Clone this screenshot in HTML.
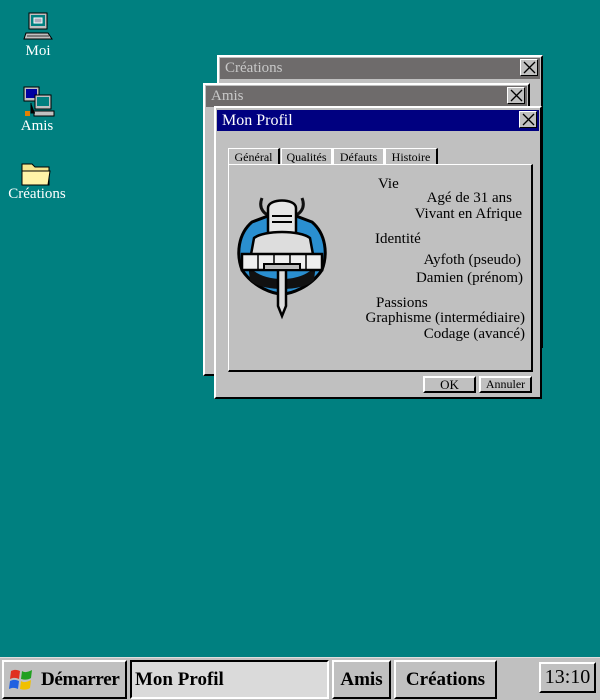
<!DOCTYPE html>
<html><head><style>
*{box-sizing:border-box;margin:0;padding:0}
body{width:600px;height:700px;background:#008080;position:relative;overflow:hidden;font-family:"Liberation Serif",serif;}
.abs{position:absolute}
.win{position:absolute;background:#c0c0c0;border:2px solid;border-color:#fff #000 #000 #fff;}
.tb{position:absolute;left:1px;right:1px;top:1px;height:21px;color:#c8c8c8;font-size:15px;padding-left:5px;line-height:21px;background:#6e6b6b}
.x{position:absolute;right:3px;top:2px;width:18px;height:17px;background:#c0c0c0;border:1px solid;border-color:#fff #000 #000 #fff;}
.x svg{position:absolute;left:2px;top:1px}
.btn{position:absolute;background:#c0c0c0;border:2px solid;border-color:#fff #000 #000 #fff;text-align:center}
.ic{position:absolute;color:#fff;font-size:15px;text-align:center;width:80px}
.t{position:absolute;font-size:15px;color:#000;white-space:nowrap}
.tab{position:absolute;top:148px;height:17px;font-size:12px;border-top:1px solid #fff;border-left:1px solid #fff;border-right:2px solid #000;text-align:center;line-height:16px}
</style></head><body>
<div class="ic" style="left:-2px;top:43px">Moi</div>
<svg class="abs" style="left:22px;top:11px" width="32" height="32"><rect x="7" y="2" width="18" height="16" fill="#c0c0c0" stroke="#000"/><rect x="9" y="4" width="14" height="11" fill="#008080"/><rect x="12" y="7" width="8" height="5" fill="#aab" stroke="#fff"/><path d="M4 22 L26 22 L30 28 L2 28Z" fill="#c0c0c0" stroke="#000"/><path d="M5 25h22" stroke="#333"/></svg>
<div class="ic" style="left:-3px;top:118px">Amis</div>
<svg class="abs" style="left:22px;top:85px" width="34" height="34"><rect x="2" y="2" width="15" height="14" fill="#c0c0c0" stroke="#000"/><rect x="4" y="4" width="11" height="9" fill="#0000a0"/><rect x="13" y="10" width="16" height="14" fill="#c0c0c0" stroke="#000"/><rect x="15" y="12" width="12" height="9" fill="#008080"/><rect x="12" y="26" width="20" height="5" fill="#c0c0c0" stroke="#000"/><path d="M9 18v10h4" stroke="#000"/><rect x="3" y="26" width="5" height="5" fill="#e08000"/></svg>
<div class="ic" style="left:-3px;top:186px">Créations</div>
<svg class="abs" style="left:19px;top:160px" width="34" height="28"><path d="M3 4h10l3 3h14v18H3z" fill="#f4e690" stroke="#000"/><path d="M3 11h28l-2 14H3z" fill="#fff3a8" stroke="#000"/></svg>

<div class="win" style="left:217px;top:55px;width:326px;height:293px"><div class="tb">Créations</div><div class="x"><svg width="13" height="13"><path d="M1 1L12 12M12 1L1 12" stroke="#000" stroke-width="1.3"/></svg></div></div>
<div class="win" style="left:203px;top:83px;width:327px;height:293px"><div class="tb">Amis</div><div class="x"><svg width="13" height="13"><path d="M1 1L12 12M12 1L1 12" stroke="#000" stroke-width="1.3"/></svg></div></div>
<div class="win" style="left:214px;top:106px;width:328px;height:293px">
<div class="tb" style="background:#000080;color:#fff;font-size:16px;top:2px">Mon Profil</div><div class="x" style="top:3px"><svg width="13" height="13"><path d="M1 1L12 12M12 1L1 12" stroke="#000" stroke-width="1.3"/></svg></div>
</div>
<div class="tab" style="left:228px;width:52px">Général</div>
<div class="tab" style="left:281px;width:52px;border-right-color:#fff">Qualités</div>
<div class="tab" style="left:333px;width:52px;border-right-color:#fff">Défauts</div>
<div class="tab" style="left:385px;width:53px">Histoire</div>
<div class="abs" style="left:228px;top:164px;width:305px;height:208px;border:2px solid;border-color:#fff #000 #000 #fff;border-left-width:1px;border-top-width:1px"></div>
<svg class="abs" style="left:234px;top:194px" width="96" height="126" viewBox="0 0 96 126">
<path d="M28 4 C24 14 30 22 40 22 M68 4 C72 14 66 22 56 22" stroke="#111" stroke-width="3" fill="none"/>
<path d="M18 28 C4 40 2 60 8 76 C20 94 40 100 48 100 C56 100 76 94 88 76 C94 60 92 40 78 28 L62 22 L34 22Z" fill="#2a8fd0" stroke="#000" stroke-width="3"/>
<path d="M14 70 C24 90 72 90 82 70 L80 86 C70 98 26 98 16 86Z" fill="#111"/>
<path d="M34 14 C34 4 62 4 62 14 L62 40 L34 40Z" fill="#e6e6e6" stroke="#000" stroke-width="2.5"/>
<path d="M38 22h20M38 28h20" stroke="#000" stroke-width="2"/>
<path d="M20 44 C30 36 66 36 76 44 L80 66 L16 66Z" fill="#ddd" stroke="#000" stroke-width="2.5"/>
<path d="M8 60 L88 60 L88 76 L8 76Z" fill="#eee" stroke="#000" stroke-width="2.5"/>
<path d="M24 60v16M40 60v16M56 60v16M72 60v16" stroke="#000" stroke-width="1.5"/>
<path d="M44 76 L52 76 L52 112 L48 122 L44 112Z" fill="#ddd" stroke="#000" stroke-width="2.5"/>
<path d="M30 70h36v6H30z" fill="#bbb" stroke="#000" stroke-width="2"/>
</svg>
<div class="t" style="left:378px;top:176px">Vie</div>
<div class="t" style="right:88px;top:190px">Agé de 31 ans</div>
<div class="t" style="right:78px;top:206px">Vivant en Afrique</div>
<div class="t" style="left:375px;top:231px">Identité</div>
<div class="t" style="right:79px;top:252px">Ayfoth (pseudo)</div>
<div class="t" style="right:77px;top:270px">Damien (prénom)</div>
<div class="t" style="left:376px;top:295px">Passions</div>
<div class="t" style="right:75px;top:310px">Graphisme (intermédiaire)</div>
<div class="t" style="right:75px;top:326px">Codage (avancé)</div>
<div class="btn" style="left:423px;top:376px;width:53px;height:17px;font-size:13px;line-height:13px">OK</div>
<div class="btn" style="left:479px;top:376px;width:53px;height:17px;font-size:12px;line-height:13px">Annuler</div>

<div class="abs" style="left:0;top:657px;width:600px;height:43px;background:#c0c0c0;border-top:1px solid #dfdfdf"></div>
<div class="btn" style="left:2px;top:660px;width:125px;height:39px;font-weight:bold;font-size:19px;line-height:35px;text-align:left;padding-left:37px;letter-spacing:-0.3px">Démarrer</div>
<svg class="abs" style="left:6px;top:667px" width="30" height="26"><path d="M5 4 C9 2 12 3 14 4 L13 12 C11 11 8 10 4 12Z" fill="#e03020"/><path d="M16 4 C19 6 22 5 26 3 L25 11 C22 13 19 13 15 12Z" fill="#20a020"/><path d="M4 14 C8 12 11 13 13 14 L12 22 C10 21 7 20 3 22Z" fill="#2060e0"/><path d="M15 14 C18 16 21 15 25 13 L24 21 C21 23 18 23 14 22Z" fill="#f0c000"/></svg>
<div class="abs" style="left:130px;top:660px;width:199px;height:39px;background:#dadada;border:2px solid;border-color:#000 #fff #fff #000;font-weight:bold;font-size:19px;line-height:35px;padding-left:3px">Mon Profil</div>
<div class="btn" style="left:332px;top:660px;width:59px;height:39px;font-weight:bold;font-size:19px;line-height:35px">Amis</div>
<div class="btn" style="left:394px;top:660px;width:103px;height:39px;font-weight:bold;font-size:19px;line-height:35px">Créations</div>
<div class="btn" style="left:539px;top:662px;width:57px;height:31px;font-size:20px;line-height:27px">13:10</div>
</body></html>
